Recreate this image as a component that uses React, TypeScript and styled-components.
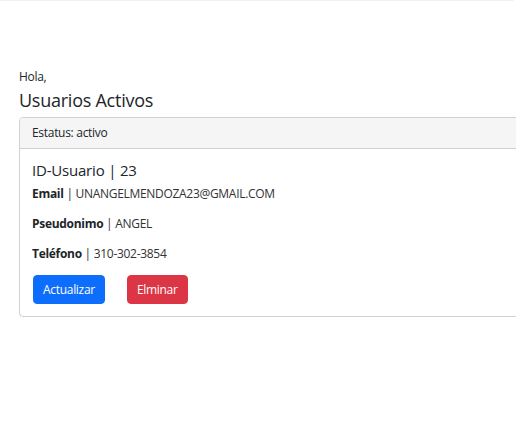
import React from "react";
import styled, { createGlobalStyle } from "styled-components";

const Global = createGlobalStyle`
  html, body { margin: 0; padding: 0; background: #fff; overflow: hidden; }
  body {
    font-family: "Open Sans", "Noto Sans", "Liberation Sans", sans-serif;
    font-size: 12px;
    line-height: 18px;
    letter-spacing: -0.3px;
    color: #212529;
  }
  * { box-sizing: border-box; }
`;

const TopBar = styled.div`
  width: 514px;
  height: 1px;
  background: #f1f1f1;
`;

const Main = styled.main`
  padding: 67px 0 0 19px;
  width: 620px;
`;

const Greeting = styled.p`
  margin: 0 0 4px;
  font-size: 12px;
  line-height: 18px;
`;

const Heading = styled.h4`
  margin: 0 0 5px;
  font-size: 18px;
  font-weight: 500;
  line-height: 1.2;
  letter-spacing: -0.25px;
`;

const Card = styled.section`
  width: 600px;
  border: 1px solid #d1d1d1;
  border-radius: 4px;
  background: #fff;
`;

const CardHeader = styled.div`
  padding: 6px 12px;
  background: #f5f5f5;
  border-bottom: 1px solid #d1d1d1;
  border-radius: 3px 3px 0 0;
  font-size: 12px;
  line-height: 18px;
`;

const CardBody = styled.div`
  padding: 12px;
`;

const Title = styled.h5`
  margin: 0 0 6px;
  font-size: 15px;
  font-weight: 500;
  line-height: 18px;
  letter-spacing: -0.2px;
`;

const Field = styled.p`
  margin: 0 0 12px;
  font-size: 12px;
  line-height: 18px;
  color: #333;
`;

const Label = styled.b`
  font-weight: 700;
  color: #212529;
`;

const Actions = styled.div`
  display: flex;
  gap: 22px;
  padding-left: 1px;
`;

const Button = styled.button<{ $variant: "primary" | "danger" }>`
  font-family: inherit;
  font-size: 12px;
  line-height: 19px;
  letter-spacing: -0.3px;
  padding: 4px 9px;
  border: 1px solid ${(p) => (p.$variant === "primary" ? "#0d6efd" : "#dc3545")};
  background: ${(p) => (p.$variant === "primary" ? "#0d6efd" : "#dc3545")};
  color: #fff;
  border-radius: 4px;
  cursor: pointer;
`;

export default function App() {
  return (
    <>
      <Global />
      <TopBar />
      <Main>
        <Greeting>Hola,</Greeting>
        <Heading>Usuarios Activos</Heading>
        <Card>
          <CardHeader>Estatus: activo</CardHeader>
          <CardBody>
            <Title>ID-Usuario | 23</Title>
            <Field>
              <Label>Email</Label> | UNANGELMENDOZA23@GMAIL.COM
            </Field>
            <Field>
              <Label>Pseudonimo</Label> | ANGEL
            </Field>
            <Field>
              <Label>Teléfono</Label> | 310-302-3854
            </Field>
            <Actions>
              <Button $variant="primary">Actualizar</Button>
              <Button $variant="danger">Elminar</Button>
            </Actions>
          </CardBody>
        </Card>
      </Main>
    </>
  );
}
